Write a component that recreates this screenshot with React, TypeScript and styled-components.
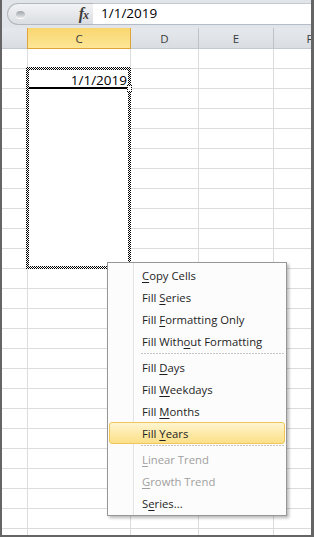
import React from 'react';
import styled, { createGlobalStyle } from 'styled-components';

const Global = createGlobalStyle`
  html, body { margin: 0; padding: 0; background: #fff; }
  body { font-family: "Open Sans", "Noto Sans", sans-serif; }
  * { box-sizing: border-box; }
`;

const Window = styled.div`
  position: relative;
  width: 314px;
  height: 537px;
  border-left: 2px solid #656565;
  border-right: 3px solid #656565;
  border-bottom: 2px solid #656565;
  display: flex;
  flex-direction: column;
  overflow: hidden;
  background: #fff;
`;

const FormulaBar = styled.div`
  flex: none;
  height: 28px;
  display: flex;
  align-items: stretch;
  padding: 3px 0 3px 5px;
  background: #e1e4e8;
`;

const NameHandle = styled.div`
  width: 86px;
  display: flex;
  align-items: center;
  justify-content: space-between;
  padding: 0 5px 0 8px;
  border: 1px solid #b3b8be;
  border-right: none;
  border-radius: 11px 0 0 11px;
  background: linear-gradient(#f2f3f5, #dadde1);
`;

const Knob = styled.div`
  width: 9px;
  height: 7px;
  border-radius: 50%;
  background: linear-gradient(#9ea2a7, #e6e8ea);
  box-shadow: 0 1px 0 #fff;
`;

const Fx = styled.div`
  font-family: "Liberation Serif", serif;
  font-style: italic;
  font-weight: bold;
  color: #3d3d3d;
  font-size: 16px;
  line-height: 1;
  letter-spacing: -1px;
  small { font-size: 12px; }
`;

const FormulaInput = styled.div`
  flex: 1;
  background: #fff;
  border-top: 1px solid #c6cbd1;
  border-bottom: 1px solid #b4bcc7;
  padding-left: 8px;
  font-size: 13.5px;
  line-height: 19px;
  color: #000;
`;

const Sheet = styled.div`
  position: relative;
  flex: 1;
  overflow: hidden;
`;

const Grid = styled.div`
  display: grid;
  grid-template-columns: 26px 103px 68px 75px 72px;
  grid-auto-rows: 20px;
`;

const HeaderRow = styled(Grid)`
  grid-auto-rows: 21px;
`;

const HeaderCell = styled.div<{ $selected?: boolean }>`
  display: flex;
  align-items: center;
  justify-content: center;
  font-size: 11.5px;
  color: #3b3b3b;
  border-right: 1px solid ${p => (p.$selected ? '#dfa43c' : '#bcc2c9')};
  border-bottom: 1px solid ${p => (p.$selected ? '#e0a33a' : '#c3c8ce')};
  background: ${p =>
    p.$selected ? 'linear-gradient(#f9d66f, #fde696)' : 'linear-gradient(#e5e8ec, #dadee3)'};
  box-shadow: ${p => (p.$selected ? '-1px 0 0 #dfa43c' : 'none')};
  overflow: hidden;
  white-space: nowrap;
`;

const Cell = styled.div`
  border-right: 1px solid #dadcdd;
  border-bottom: 1px solid #dadcdd;
`;

const Selection = styled.div`
  position: absolute;
  left: 24px;
  top: 39px;
  width: 105px;
  height: 202px;
  padding: 3px;
  background: repeating-conic-gradient(#000 0 25%, #fff 0 50%) 0 0 / 2px 2px;
`;

const SelectionInner = styled.div`
  height: 100%;
  background: #fff;
`;

const ActiveCell = styled.div`
  height: 19px;
  border-bottom: 2px solid #000;
  text-align: right;
  padding: 2px 1px 0 0;
  font-size: 13.5px;
  line-height: 16px;
  color: #000;
`;

const FillHandle = styled.div`
  position: absolute;
  left: 101px;
  top: 18px;
  width: 5px;
  height: 7px;
  background: #fff;
  border: 1px dotted #000;
`;

const Menu = styled.div`
  position: absolute;
  left: 105px;
  top: 262px;
  width: 180px;
  padding: 1px 0;
  border: 1px solid #979797;
  background: linear-gradient(
      to right,
      #fcfcfc 25px,
      #e2e3e3 25px 26px,
      #ffffff 26px 27px,
      #fcfcfc 27px
    );
  box-shadow: 2px 2px 3px rgba(0, 0, 0, 0.28);
`;

const Item = styled.div<{ $disabled?: boolean; $active?: boolean }>`
  height: 22px;
  margin: 0 1px;
  padding-left: 32px;
  display: flex;
  align-items: center;
  font-size: 11.3px;
  color: ${p => (p.$disabled ? '#a0a0a0' : '#1e1e1e')};
  border: 1px solid ${p => (p.$active ? '#f0c659' : 'transparent')};
  border-radius: 3px;
  background: ${p =>
    p.$active ? 'linear-gradient(#fef5d2, #fde9a6 55%, #fbe08a)' : 'transparent'};
  white-space: pre;
  u { text-decoration-thickness: 1px; text-underline-offset: 2px; }
`;

const Separator = styled.div`
  height: 4px;
  margin: 0 2px 0 33px;
  background: repeating-linear-gradient(to right, #c5c5c5 0 2px, transparent 2px 3px) 0 1px / 100% 1px
    no-repeat;
`;

type Entry = { label: string; disabled?: boolean; active?: boolean } | 'sep';

const entries: Entry[] = [
  { label: '&Copy Cells' },
  { label: 'Fill &Series' },
  { label: 'Fill &Formatting Only' },
  { label: 'Fill With&out Formatting' },
  'sep',
  { label: 'Fill &Days' },
  { label: 'Fill &Weekdays' },
  { label: 'Fill &Months' },
  { label: 'Fill &Years', active: true },
  'sep',
  { label: '&Linear Trend', disabled: true },
  { label: '&Growth Trend', disabled: true },
  { label: 'S&eries...' },
];

const Label = ({ text }: { text: string }) => {
  const i = text.indexOf('&');
  if (i < 0) return <span>{text}</span>;
  return (
    <span>
      {text.slice(0, i)}
      <u>{text[i + 1]}</u>
      {text.slice(i + 2)}
    </span>
  );
};

const columns = ['', 'C', 'D', 'E', 'F'];

export default function App() {
  const rows = Array.from({ length: 25 });
  return (
    <>
      <Global />
      <Window>
        <FormulaBar>
          <NameHandle>
            <Knob />
            <Fx>
              f<small>x</small>
            </Fx>
          </NameHandle>
          <FormulaInput>1/1/2019</FormulaInput>
        </FormulaBar>
        <Sheet>
          <HeaderRow>
            {columns.map((c, i) => (
              <HeaderCell key={i} $selected={c === 'C'}>
                {c}
              </HeaderCell>
            ))}
          </HeaderRow>
          <Grid>
            {rows.map((_, r) => columns.map((_, c) => <Cell key={`${r}-${c}`} />))}
          </Grid>
          <Selection>
            <SelectionInner>
              <ActiveCell>1/1/2019</ActiveCell>
            </SelectionInner>
            <FillHandle />
          </Selection>
        </Sheet>
        <Menu>
          {entries.map((e, i) =>
            e === 'sep' ? (
              <Separator key={i} />
            ) : (
              <Item key={i} $disabled={e.disabled} $active={e.active}>
                <Label text={e.label} />
              </Item>
            )
          )}
        </Menu>
      </Window>
    </>
  );
}
